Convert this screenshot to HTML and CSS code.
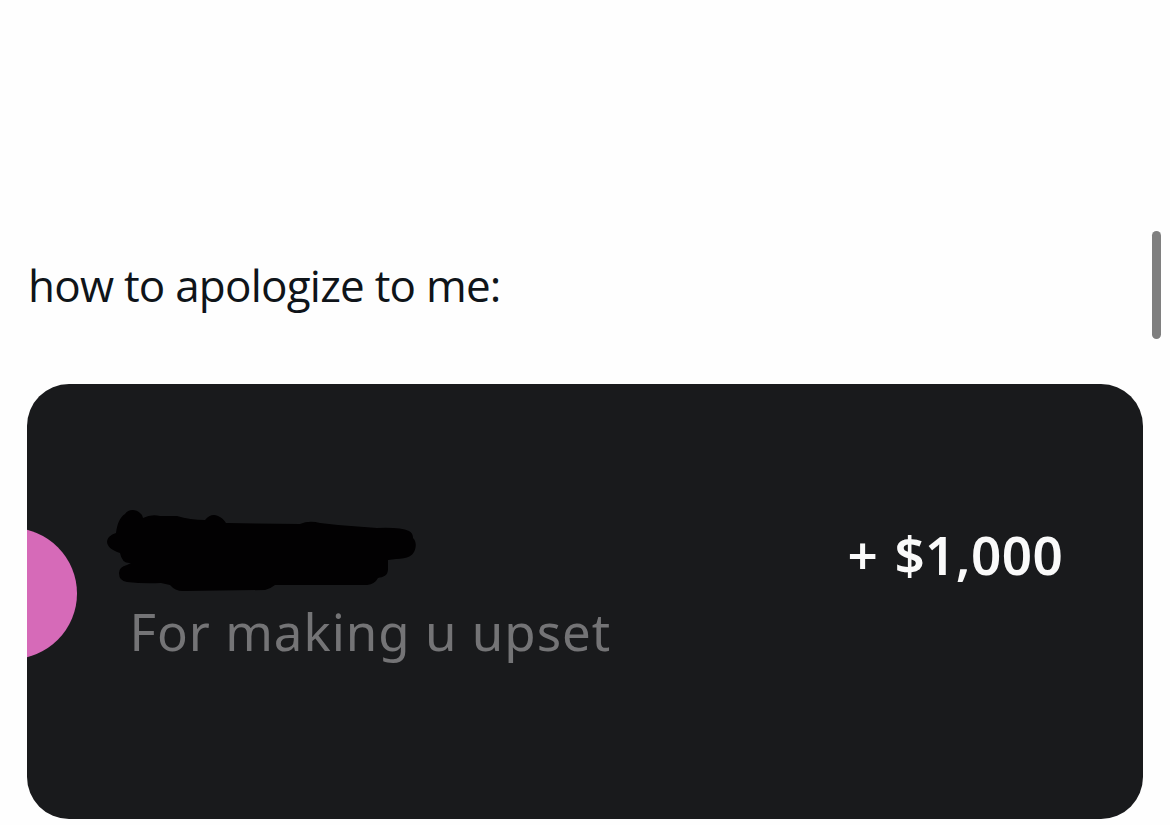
FILE: index.html
```html
<!DOCTYPE html>
<html lang="en">
<head>
<meta charset="utf-8">
<title>Post</title>
<link rel="stylesheet" href="styles.css">
</head>
<body>
<main class="post">
  <p class="caption">how to apologize to me:</p>
  <section class="card">
    <div class="avatar"></div>
    <div class="details">
      <svg class="scribble" width="310" height="82" viewBox="0 0 310 82" aria-hidden="true">
        <path d="M9 24C10 15 13 8 18 5C21 0 29 0 33 4Q36 6 36 9Q44 5 53 7L70 7Q83 11 98 11Q104 4 111 7Q116 9 119 14L193 15Q202 11 213 14L231 16L270 19Q293 18 302 22Q306 24 306 29C310 33 309 39 307 43C303 51 292 49 281 51L281 60C281 67 276 68 271 69Q268 75 260 76L168 76Q163 80 158 81L76 82Q68 82 63 76L54 74Q37 75 20 73Q12 72 12 64Q12 58 20 56L24 54Q15 55 13 44C2 41-3 34 2 28Q5 25 9 24Z"/>
      </svg>
      <p class="note">For making u upset</p>
    </div>
    <p class="amount">+ $1,000</p>
  </section>
  <div class="scrollbar"></div>
</main>
</body>
</html>
```
FILE: styles.css
```css
* { box-sizing: border-box; }

body {
  margin: 0;
  background: #fefefe;
}

p { margin: 0; white-space: nowrap; }

.post {
  position: relative;
  height: 825px;
  padding: 255px 27px 0;
  overflow: hidden;
}

.caption {
  height: 129px;
  padding-left: 1px;
  color: #0f1419;
  font: 44px/60px "Open Sans", sans-serif;
  letter-spacing: -0.77px;
}

.card {
  display: flex;
  width: 1116px;
  height: 435px;
  overflow: hidden;
  border-radius: 42px;
  background: #191a1c;
}

.avatar {
  flex: none;
  width: 131px;
  height: 131px;
  margin: 144px 0 0 -81.5px;
  border-radius: 50%;
  background: #d66ab8;
}

.details {
  flex: none;
  width: 600px;
  margin: 125px 0 0 30px;
}

.scribble {
  display: block;
  fill: #020102;
}

.note {
  padding-left: 23px;
  color: #747476;
  font: 51px/80px "Noto Sans", sans-serif;
  letter-spacing: 1px;
}

.amount {
  margin: 131px 0 0 141px;
  color: #fafafa;
  font: 600 53px/80px "Noto Sans", sans-serif;
  letter-spacing: 0.4px;
  word-spacing: 2px;
}

/* Scroll indicator floats above the page edge */
.scrollbar {
  position: absolute;
  top: 231px;
  right: 9px;
  width: 9px;
  height: 108px;
  border-radius: 5px;
  background: #7f7f7f;
}
```
